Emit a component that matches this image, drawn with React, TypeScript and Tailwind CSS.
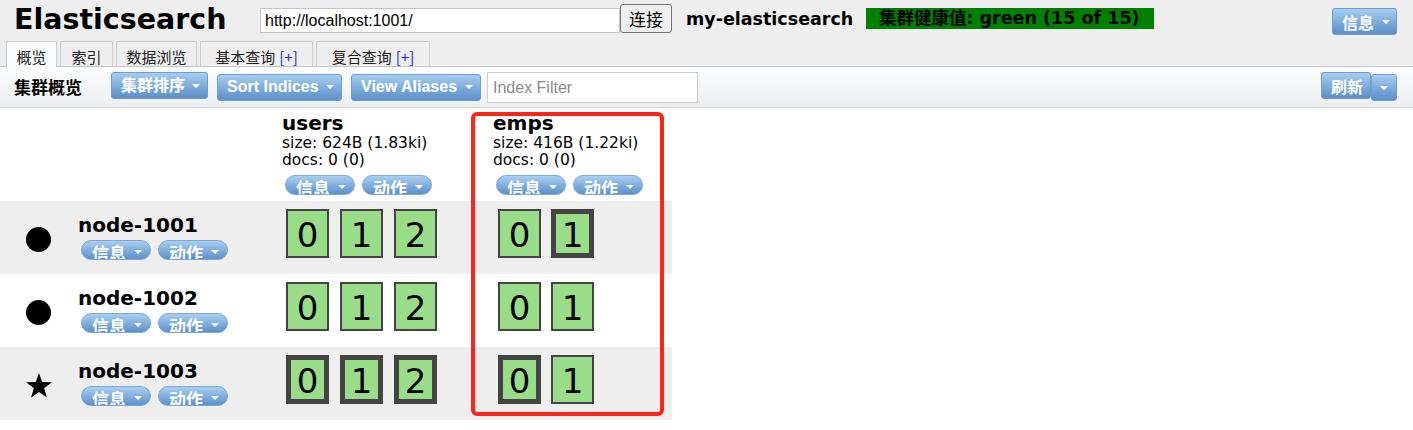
import React from "react";

const DV = "font-['DejaVu_Sans','Noto_Sans_CJK_SC',sans-serif]";
const CJK = "font-['Noto_Sans_CJK_SC',sans-serif]";
const AR = "font-['Liberation_Sans','Noto_Sans_CJK_SC',sans-serif]";

function Caret({ className = "" }: { className?: string }) {
  return (
    <span
      className={
        "inline-block w-0 h-0 border-l-[4px] border-r-[4px] border-t-[4px] border-l-transparent border-r-transparent border-t-white shrink-0 " +
        className
      }
    />
  );
}

const btnSkin =
  "rounded-[3px] border border-[#6d9dd3] bg-linear-to-b from-[#a6cdf0] to-[#5a8fc7] text-white font-bold";

function TBtn({ label, w, extra = "" }: { label: string; w: string; extra?: string }) {
  return (
    <div className={`${btnSkin} ${w} h-[27px] flex items-center justify-between pl-[9px] pr-[7px] ${extra}`}>
      <span className={`text-[16px] leading-[20px] ${AR}`}>{label}</span>
      <Caret />
    </div>
  );
}

function Pill({ label }: { label: string }) {
  return (
    <div className="w-[70px] h-[20px] rounded-full overflow-hidden border border-[#7aa6d8] bg-linear-to-b from-[#a9cff1] to-[#5b91c9] flex items-start pl-[10px]">
      <span className={`mt-[3px] text-[17px] leading-[17px] font-bold text-white ${CJK}`}>{label}</span>
      <Caret className="ml-[8px] mt-[9px]" />
    </div>
  );
}

function Shard({ n, primary }: { n: number; primary: boolean }) {
  return (
    <div
      className={`w-[43px] h-[49px] bg-[#99dd88] flex items-center justify-center text-[34px] leading-none text-black ${DV} ${
        primary ? "border-[5px] border-[#444444]" : "border-2 border-[#444444]"
      }`}
    >
      <span className="mt-[3px]">{n}</span>
    </div>
  );
}

function Star() {
  return (
    <svg width="28" height="27" viewBox="0 0 24 23">
      <path d="M12 0.8 L14.7 8.6 L23 8.8 L16.4 13.8 L18.8 21.8 L12 17 L5.2 21.8 L7.6 13.8 L1 8.8 L9.3 8.6 Z" fill="#000" />
    </svg>
  );
}

const nodes = [
  { name: "node-1001", star: false, users: [false, false, false], emps: [false, true], bg: "bg-[#eeeeee]" },
  { name: "node-1002", star: false, users: [false, false, false], emps: [false, false], bg: "bg-white" },
  { name: "node-1003", star: true, users: [true, true, true], emps: [true, false], bg: "bg-[#eeeeee]" },
];

const tabs = [
  { t: "概览", w: "w-[51px]", active: true, plus: false },
  { t: "索引", w: "w-[53px]", active: false, plus: false },
  { t: "数据浏览", w: "w-[81px]", active: false, plus: false },
  { t: "基本查询", w: "w-[113px]", active: false, plus: true },
  { t: "复合查询", w: "w-[114px]", active: false, plus: true },
];

export default function App() {
  return (
    <div className="w-[1413px] h-[430px] bg-white relative overflow-hidden text-black">
      {/* header */}
      <div className="bg-[#eeeeee]">
        <div className="h-[41px] flex items-start">
          <div className={`ml-[14px] w-[246px] mt-[3px] text-[28.5px] leading-[34px] font-bold ${DV}`}>Elasticsearch</div>
          <div className={`mt-[8px] w-[360px] h-[25px] bg-white border border-[#c4c4c4] pl-[4px] text-[16px] leading-[23px] ${AR}`}>
            http://localhost:1001/
          </div>
          <div className={`mt-[4px] w-[52px] h-[29px] border border-[#767676] rounded-[3px] bg-[#efefef] flex items-center justify-center text-[17px] ${CJK}`}>
            连接
          </div>
          <div className={`ml-[14px] w-[180px] mt-[9px] text-[17.5px] leading-[21px] font-bold ${DV}`}>my-elasticsearch</div>
          <div className={`mt-[8px] w-[288px] h-[21px] bg-[#008000] pl-[13px] text-[17.5px] leading-[21px] font-bold ${DV}`}>
            集群健康值: green (15 of 15)
          </div>
          <div className={`${btnSkin} ml-auto mr-[16px] mt-[8px] w-[65px] h-[27px] flex items-center justify-between pl-[9px] pr-[6px]`}>
            <span className={`text-[16px] leading-[20px] ${CJK}`}>信息</span>
            <Caret />
          </div>
        </div>
        {/* tabs */}
        <div className="h-[25px] flex items-end pl-[6px] gap-[3px]">
          {tabs.map((tb) => (
            <div
              key={tb.t}
              className={`${tb.w} h-[25px] border border-b-0 border-[#cccccc] flex justify-center pt-[6px] text-[15px] leading-[18px] text-[#222] ${CJK} ${
                tb.active ? "bg-[#fafbfc] h-[26px] mb-[-1px] relative z-10" : "bg-[#eeeeee]"
              }`}
            >
              <span>
                {tb.t}
                {tb.plus && <span className="text-[#2222ff] ml-[4px]">[+]</span>}
              </span>
            </div>
          ))}
        </div>
      </div>

      {/* toolbar */}
      <div className="h-[42px] border-t border-b border-t-[#c2c2c2] border-b-[#d4d4d4] bg-linear-to-b from-[#fbfcfd] to-[#eceef0] flex items-center">
        <div className={`ml-[14px] w-[97px] text-[17px] font-bold ${CJK}`}>集群概览</div>
        <TBtn label="集群排序" w="w-[97px]" extra="self-start mt-[5px]" />
        <TBtn label="Sort Indices" w="w-[125px]" extra="ml-[9px]" />
        <TBtn label="View Aliases" w="w-[130px]" extra="ml-[9px]" />
        <div className={`ml-[6px] w-[211px] h-[31px] bg-white border border-[#cccccc] pl-[5px] text-[16px] leading-[29px] text-[#8a8a8a] ${AR}`}>
          Index Filter
        </div>
        <div className="ml-auto mr-[16px] flex items-start self-start mt-[5px]">
          <div className={`${btnSkin} w-[50px] h-[27px] flex items-center pl-[9px]`}>
            <span className={`text-[16px] leading-[20px] ${CJK}`}>刷新</span>
          </div>
          <div className={`${btnSkin} mt-[2px] w-[26px] h-[27px] flex items-center justify-center`}>
            <Caret />
          </div>
        </div>
      </div>

      {/* content */}
      <div className="pt-[3px]">
        <div className="w-[672px] grid grid-cols-[282px_211px_179px]">
          <div className="h-[90px]" />
          {[
            { n: "users", s: "size: 624B (1.83ki)" },
            { n: "emps", s: "size: 416B (1.22ki)" },
          ].map((c) => (
            <div key={c.n} className={`h-[90px] ${DV}`}>
              <div className="text-[20px] leading-[24px] font-bold">{c.n}</div>
              <div className="text-[15.5px] leading-[17px]">{c.s}</div>
              <div className="text-[15.5px] leading-[17px]">docs: 0 (0)</div>
              <div className="flex gap-[7px] ml-[3px] mt-[6px]">
                <Pill label="信息" />
                <Pill label="动作" />
              </div>
            </div>
          ))}
          {nodes.map((nd) => (
            <React.Fragment key={nd.name}>
              <div className={`${nd.bg} h-[73px] flex items-start`}>
                <div className="w-[75px] h-[73px] flex items-center justify-center pl-[2px] pt-[3px]">
                  {nd.star ? <Star /> : <div className="w-[25px] h-[25px] rounded-full bg-black" />}
                </div>
                <div className="ml-[3px] pt-[12px]">
                  <div className={`text-[20px] leading-[24px] font-bold ${DV}`}>{nd.name}</div>
                  <div className="flex gap-[7px] ml-[3px] mt-[3px]">
                    <Pill label="信息" />
                    <Pill label="动作" />
                  </div>
                </div>
              </div>
              <div className={`${nd.bg} h-[73px] flex items-start gap-[11px] pl-[4px] pt-[8px]`}>
                {nd.users.map((p, i) => (
                  <Shard key={i} n={i} primary={p} />
                ))}
              </div>
              <div className={`${nd.bg} h-[73px] flex items-start gap-[10px] pl-[5px] pt-[8px]`}>
                {nd.emps.map((p, i) => (
                  <Shard key={i} n={i} primary={p} />
                ))}
              </div>
            </React.Fragment>
          ))}
        </div>
      </div>

      {/* red annotation */}
      <div className="absolute left-[471px] top-[112px] w-[193px] h-[304px] border-[4px] border-[#ff2418] rounded-[6px] pointer-events-none" />
    </div>
  );
}
